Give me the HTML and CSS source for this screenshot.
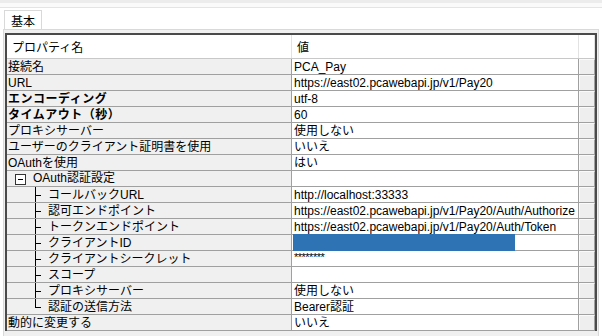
FILE: index.html
```html
<!DOCTYPE html>
<html lang="ja">
<head>
    <meta charset="UTF-8">
    <title>接続プロパティ</title>
    <link rel="stylesheet" href="styles.css">
</head>
<body>
    <div class="topbar"></div>

    <div class="tabs">
        <div class="tab">基本</div>
    </div>

    <div class="panel">
        <div class="grid">
            <div class="row head">
                <div class="cell name">プロパティ名</div>
                <div class="cell value">値</div>
                <div class="cell extra"></div>
            </div>

            <div class="row">
                <div class="cell name">接続名</div>
                <div class="cell value">PCA_Pay</div>
                <div class="cell extra"></div>
            </div>
            <div class="row">
                <div class="cell name">URL</div>
                <div class="cell value">https://east02.pcawebapi.jp/v1/Pay20</div>
                <div class="cell extra"></div>
            </div>
            <div class="row">
                <div class="cell name bold">エンコーディング</div>
                <div class="cell value">utf-8</div>
                <div class="cell extra"></div>
            </div>
            <div class="row">
                <div class="cell name bold">タイムアウト（秒）</div>
                <div class="cell value">60</div>
                <div class="cell extra"></div>
            </div>
            <div class="row">
                <div class="cell name">プロキシサーバー</div>
                <div class="cell value">使用しない</div>
                <div class="cell extra"></div>
            </div>
            <div class="row">
                <div class="cell name">ユーザーのクライアント証明書を使用</div>
                <div class="cell value">いいえ</div>
                <div class="cell extra"></div>
            </div>
            <div class="row">
                <div class="cell name">OAuthを使用</div>
                <div class="cell value">はい</div>
                <div class="cell extra"></div>
            </div>

            <!-- OAuth group -->
            <div class="row">
                <div class="cell name group"><span class="toggle"></span>OAuth認証設定</div>
                <div class="cell value"></div>
                <div class="cell extra"></div>
            </div>
            <div class="row">
                <div class="cell name child"><span class="twig"></span>コールバックURL</div>
                <div class="cell value">http://localhost:33333</div>
                <div class="cell extra"></div>
            </div>
            <div class="row">
                <div class="cell name child"><span class="twig"></span>認可エンドポイント</div>
                <div class="cell value">https://east02.pcawebapi.jp/v1/Pay20/Auth/Authorize</div>
                <div class="cell extra"></div>
            </div>
            <div class="row">
                <div class="cell name child"><span class="twig"></span>トークンエンドポイント</div>
                <div class="cell value">https://east02.pcawebapi.jp/v1/Pay20/Auth/Token</div>
                <div class="cell extra"></div>
            </div>
            <div class="row">
                <div class="cell name child"><span class="twig"></span>クライアントID</div>
                <div class="cell value"><div class="masked"></div></div>
                <div class="cell extra"></div>
            </div>
            <div class="row">
                <div class="cell name child"><span class="twig"></span>クライアントシークレット</div>
                <div class="cell value secret">********</div>
                <div class="cell extra"></div>
            </div>
            <div class="row">
                <div class="cell name child"><span class="twig"></span>スコープ</div>
                <div class="cell value"></div>
                <div class="cell extra"></div>
            </div>
            <div class="row">
                <div class="cell name child"><span class="twig"></span>プロキシサーバー</div>
                <div class="cell value">使用しない</div>
                <div class="cell extra"></div>
            </div>
            <div class="row">
                <div class="cell name child"><span class="twig last"></span>認証の送信方法</div>
                <div class="cell value">Bearer認証</div>
                <div class="cell extra"></div>
            </div>

            <div class="row">
                <div class="cell name">動的に変更する</div>
                <div class="cell value">いいえ</div>
                <div class="cell extra"></div>
            </div>
        </div>
    </div>
</body>
</html>
```

FILE: styles.css
```css
* {
    margin: 0;
    padding: 0;
    box-sizing: border-box;
}

body {
    width: 602px;
    height: 336px;
    overflow: hidden;
    background: #fff;
    font-family: "Liberation Sans", "Noto Sans CJK JP", sans-serif;
    font-size: 12px;
    color: #000;
}

.topbar {
    height: 8px;
    background: linear-gradient(#ececec 0, #ececec 3px, #fafafa 3px);
    border-bottom: 1px solid #e4e4e4;
}

.tabs {
    display: flex;
    padding: 2px 0 0 4px;
}

.tab {
    height: 19px;
    line-height: 16px;
    padding: 3px 6px 0 6px;
    border: 1px solid #d9d9d9;
    border-bottom: none;
    background: #fff;
}

.panel {
    margin: 0 3px;
    padding: 3px 1px 0 1px;
    border: 1px solid #d9d9d9;
    border-bottom: none;
    height: 310px;
    background: #f0f0f0;
}

.grid {
    border-top: 2px solid #4a4a4a;
    border-left: 2px solid #4a4a4a;
    border-right: 2px solid #4a4a4a;
    background: #f0f0f0;
}

.row {
    display: grid;
    grid-template-columns: 285px 287px 16px;
    height: 16px;
    border-bottom: 1px solid #a0a0a0;
}

.cell {
    height: 15px;
    padding-top: 2px;
    line-height: 13px;
    white-space: nowrap;
    overflow: visible;
    border-right: 1px solid #a0a0a0;
}

.name {
    padding-left: 1px;
    background: #f0f0f0;
    display: flex;
    align-items: center;
}

.name.bold {
    font-weight: bold;
    letter-spacing: 0.5px;
}

.value {
    padding-left: 2px;
    background: #fff;
}

.extra {
    background: #eeeeee;
    border-top: 1px solid #fafafa;
    border-left: 1px solid #fafafa;
}

/* header row */
.row.head {
    height: 24px;
    border-bottom: 1px solid #c8c8c8;
}

.row.head .cell {
    height: 23px;
    padding-top: 4px;
    line-height: 19px;
    background: #fff;
    border-right: 1px solid #e2e2e2;
}

.row.head .name {
    padding-left: 5px;
}

.row.head .value {
    padding-left: 5px;
}

.row.head .extra {
    border: none;
    border-right: 1px solid #e2e2e2;
}

/* tree */
.name.group,
.name.child {
    padding-top: 0;
}

.name.group {
    line-height: 17px;
    padding-top: 0;
}

.toggle {
    width: 11px;
    height: 11px;
    margin: 1px 7px 0 7px;
    border: 1px solid #333;
    background: linear-gradient(#000, #000) center / 5px 1px no-repeat, #fff;
}

.name.child {
    align-items: flex-start;
    line-height: 17px;
}

.twig {
    width: 13px;
    height: 15px;
    margin-left: 27px;
    flex-shrink: 0;
    background:
        linear-gradient(#000, #000) 0 0 / 1px 100% no-repeat,
        linear-gradient(#000, #000) 0 8px / 6px 1px no-repeat;
}

.twig.last {
    background:
        linear-gradient(#000, #000) 0 0 / 1px 9px no-repeat,
        linear-gradient(#000, #000) 0 8px / 6px 1px no-repeat;
}

.value:has(.masked) {
    padding-top: 0;
}

.masked {
    width: 222px;
    height: 17px;
    margin: -1px 0 0 -1px;
    background: #2e74b5;
}

.secret {
    font-size: 11px;
    letter-spacing: -0.5px;
    padding-top: 0;
}
```
